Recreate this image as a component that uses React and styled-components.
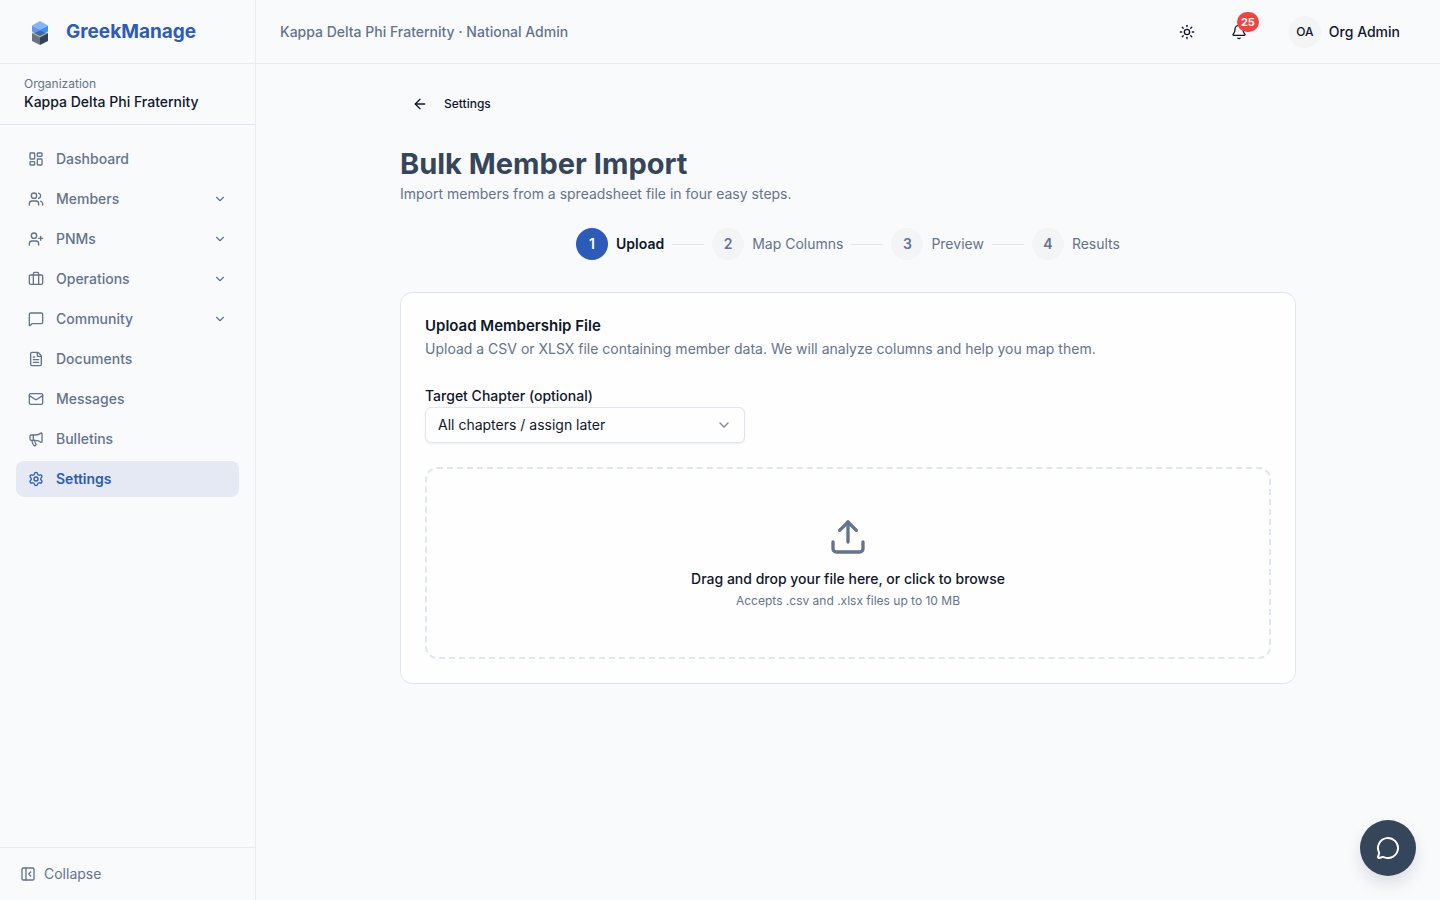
import { useState } from 'react'
import styled, { createGlobalStyle } from 'styled-components'
import {
    ArrowLeft, Bell, Briefcase, ChevronDown, FileText, LayoutDashboard, Mail, Megaphone,
    MessageCircle, MessageSquare, PanelLeftClose, Settings, Sun, Upload, UserPlus, Users
} from 'lucide-react'

const Colors = {
    page: '#f9fafc',
    card: '#fefefe',
    text: '#0f172a',
    heading: '#35455a',
    muted: '#64748b',
    primary: '#2d5bb9',
    active: '#e4e9f4',
    soft: '#f3f4f6',
    line: '#e9ecf1',
    border: '#dfe6f0',
    danger: '#ef4444'
}

const navItems = [
    { label: 'Dashboard', icon: LayoutDashboard },
    { label: 'Members', icon: Users, group: true },
    { label: 'PNMs', icon: UserPlus, group: true },
    { label: 'Operations', icon: Briefcase, group: true },
    { label: 'Community', icon: MessageSquare, group: true },
    { label: 'Documents', icon: FileText },
    { label: 'Messages', icon: Mail },
    { label: 'Bulletins', icon: Megaphone },
    { label: 'Settings', icon: Settings, active: true }
]

const steps = ['Upload', 'Map Columns', 'Preview', 'Results']

const Logo = () => (
    <svg width="16" height="24" viewBox="0 0 16 24" aria-hidden="true">
        <path d="M0 12 8 8 16 12 8 17Z" fill="#a3abb6" />
        <path d="M0 12 8 16.5V24L0 20Z" fill="#6b7482" />
        <path d="M16 12 8 16.5V24L16 20Z" fill="#364153" />
        <path d="M0 4.5 8 8.5V14L0 10.5Z" fill="#6a93f0" />
        <path d="M16 4.5 8 8.5V14L16 10.5Z" fill="#3a95ea" />
        <path d="M8 9.5 13.5 12 8 15 2.5 12Z" fill="#3b6d9f" />
        <path d="M0 4.5 8 0 16 4.5 8 8.8Z" fill="#85b4f3" />
    </svg>
)

const NavItem = ({ item }) => {

    const Icon = item.icon
    const content = (
        <>
            <Icon size={16} />
            <NavLabel>{item.label}</NavLabel>
            {item.group && <ChevronDown size={14} />}
        </>
    )

    if (item.group) return <NavRow as="button" type="button" aria-expanded="false">{content}</NavRow>

    return <NavRow href="#" $active={item.active}>{content}</NavRow>
}

const App = () => {

    const [chapter, setChapter] = useState('all')

    return (
        <>
            <GlobalStyle />
            <Layout>
                <Sidebar>
                    <Brand href="#"><Logo /><BrandName>GreekManage</BrandName></Brand>
                    <Organization>
                        <OrgCaption>Organization</OrgCaption>
                        <OrgName>Kappa Delta Phi Fraternity</OrgName>
                    </Organization>
                    <Nav>
                        {navItems.map(item => <NavItem key={item.label} item={item} />)}
                    </Nav>
                    <SidebarFooter>
                        <CollapseButton type="button"><PanelLeftClose size={16} />Collapse</CollapseButton>
                    </SidebarFooter>
                </Sidebar>

                <Body>
                    <Header>
                        <Context>Kappa Delta Phi Fraternity · National Admin</Context>
                        <Actions>
                            <IconButton type="button" aria-label="Toggle theme"><Sun size={16} /></IconButton>
                            <IconButton type="button" aria-label="Notifications">
                                <Bell size={16} />
                                <Badge>25</Badge>
                            </IconButton>
                            <UserButton type="button"><Avatar>OA</Avatar>Org Admin</UserButton>
                        </Actions>
                    </Header>

                    <Main>
                        <Content>
                            <BackLink href="#"><ArrowLeft size={16} />Settings</BackLink>
                            <Title>Bulk Member Import</Title>
                            <Text>Import members from a spreadsheet file in four easy steps.</Text>

                            <Stepper>
                                {steps.map((step, i) => (
                                    <Step key={step} $active={i === 0}>
                                        <StepNumber $active={i === 0}>{i + 1}</StepNumber>
                                        {step}
                                    </Step>
                                ))}
                            </Stepper>

                            <Card>
                                <CardTitle>Upload Membership File</CardTitle>
                                <Text>Upload a CSV or XLSX file containing member data. We will analyze columns and help you map them.</Text>
                                <Field>
                                    <FieldLabel htmlFor="chapter">Target Chapter (optional)</FieldLabel>
                                    <SelectHolder>
                                        <Select id="chapter" value={chapter} onChange={e => setChapter(e.target.value)}>
                                            <option value="all">All chapters / assign later</option>
                                        </Select>
                                        <ChevronDown size={16} />
                                    </SelectHolder>
                                </Field>
                                <DropZone>
                                    <FileInput type="file" accept=".csv,.xlsx" />
                                    <Upload size={40} />
                                    <DropTitle>Drag and drop your file here, or click to browse</DropTitle>
                                    <DropHint>Accepts .csv and .xlsx files up to 10 MB</DropHint>
                                </DropZone>
                            </Card>
                        </Content>
                    </Main>
                </Body>
            </Layout>
            <ChatButton type="button" aria-label="Open chat"><MessageCircle size={24} /></ChatButton>
        </>
    )
}

export default App

const GlobalStyle = createGlobalStyle`

    *
    {
        box-sizing: border-box;
    }

    body
    {
        margin: 0;
        background-color: ${Colors.page};
        color: ${Colors.text};
        font-family: Inter, "Liberation Sans", sans-serif;
        font-size: 14px;
        line-height: 20px;
        -webkit-font-smoothing: antialiased;
    }

    h1, p
    {
        margin: 0;
    }

    a
    {
        color: inherit;
        text-decoration: none;
    }

    button, select
    {
        font: inherit;
        color: inherit;
        background: none;
        border: none;
        padding: 0;
        cursor: pointer;
    }

    svg
    {
        flex-shrink: 0;
    }

`

const Layout = styled.div`

    display: flex;
    min-height: 100vh;

`
const Sidebar = styled.aside`

    position: sticky;
    top: 0;
    display: flex;
    flex-direction: column;
    flex-shrink: 0;
    width: 256px;
    height: 100vh;
    border-right: 1px solid ${Colors.line};

`
const Brand = styled.a`

    display: flex;
    align-items: center;
    gap: 18px;
    height: 64px;
    padding: 2px 32px 0;
    border-bottom: 1px solid ${Colors.line};

`
const BrandName = styled.span`

    font-size: 19px;
    font-weight: 700;
    line-height: 28px;
    color: ${Colors.primary};
    padding-bottom: 2px;

`
const Organization = styled.div`

    padding: 12px 24px;
    border-bottom: 1px solid ${Colors.border};

`
const OrgCaption = styled.p`

    font-size: 12px;
    line-height: 16px;
    color: ${Colors.muted};

`
const OrgName = styled.p`

    font-weight: 500;

`
const Nav = styled.nav`

    display: flex;
    flex-direction: column;
    flex: 1;
    gap: 4px;
    padding: 16px;
    overflow-y: auto;

`
const NavRow = styled.a`

    display: flex;
    align-items: center;
    gap: 12px;
    height: 36px;
    flex-shrink: 0;
    padding: 0 12px;
    border-radius: 8px;
    font-weight: ${props => props.$active ? 600 : 500};
    text-align: left;
    color: ${props => props.$active ? Colors.primary : Colors.muted};
    background-color: ${props => props.$active ? Colors.active : 'transparent'};

`
const NavLabel = styled.span`

    flex: 1;

`
const SidebarFooter = styled.div`

    padding: 8px;
    border-top: 1px solid ${Colors.line};

`
const CollapseButton = styled.button`

    display: flex;
    align-items: center;
    gap: 8px;
    width: 100%;
    height: 36px;
    padding: 0 12px;
    color: ${Colors.muted};

`
const Body = styled.div`

    flex: 1;
    min-width: 0;

`
const Header = styled.header`

    display: flex;
    align-items: center;
    justify-content: space-between;
    height: 64px;
    padding: 0 24px;
    border-bottom: 1px solid ${Colors.line};

`
const Context = styled.p`

    font-weight: 500;
    color: ${Colors.muted};

`
const Actions = styled.div`

    display: flex;
    align-items: center;
    gap: 16px;

`
const IconButton = styled.button`

    position: relative;
    display: flex;
    align-items: center;
    justify-content: center;
    width: 36px;
    height: 36px;

`
const Badge = styled.span`

    position: absolute;
    top: -2px;
    right: -2px;
    min-width: 20px;
    height: 20px;
    padding: 0 4px;
    border-radius: 10px;
    background-color: ${Colors.danger};
    color: #ffffff;
    font-size: 11px;
    font-weight: 700;
    text-align: center;

`
const UserButton = styled.button`

    display: flex;
    align-items: center;
    gap: 8px;
    padding: 0 16px;
    font-weight: 500;

`
const Avatar = styled.span`

    display: flex;
    align-items: center;
    justify-content: center;
    width: 32px;
    height: 32px;
    border-radius: 50%;
    background-color: ${Colors.soft};
    font-size: 12px;

`
const Main = styled.main`

    padding: 24px;

`
const Content = styled.div`

    max-width: 896px;
    margin: 0 auto;

`
const BackLink = styled.a`

    display: inline-flex;
    align-items: center;
    gap: 16px;
    height: 32px;
    padding: 0 12px;
    font-size: 12px;
    font-weight: 500;

`
const Title = styled.h1`

    margin-top: 24px;
    font-size: 29px;
    font-weight: 700;
    line-height: 40px;
    color: ${Colors.heading};

`
const Text = styled.p`

    color: ${Colors.muted};

`
const Stepper = styled.ol`

    display: flex;
    align-items: center;
    justify-content: center;
    gap: 8px;
    margin: 24px 0 32px;
    padding: 0;
    list-style: none;

`
const Step = styled.li`

    display: flex;
    align-items: center;
    gap: 8px;
    font-weight: ${props => props.$active ? 600 : 400};
    color: ${props => props.$active ? Colors.text : Colors.muted};

    &:not(:last-child)::after
    {
        content: '';
        width: 32px;
        height: 1px;
        background-color: ${Colors.border};
    }

`
const StepNumber = styled.span`

    display: flex;
    align-items: center;
    justify-content: center;
    width: 32px;
    height: 32px;
    border-radius: 50%;
    font-weight: 600;
    color: ${props => props.$active ? '#ffffff' : Colors.muted};
    background-color: ${props => props.$active ? Colors.primary : Colors.soft};

`
const Card = styled.section`

    padding: 24px;
    border: 1px solid ${Colors.border};
    border-radius: 12px;
    background-color: ${Colors.card};

`
const CardTitle = styled.h2`

    margin: 0 0 4px;
    font-size: 15px;
    font-weight: 600;
    line-height: 18px;

`
const Field = styled.div`

    max-width: 320px;
    margin: 24px 0;

`
const FieldLabel = styled.label`

    display: block;
    padding-top: 2px;
    font-weight: 500;
    line-height: 22px;

`
const SelectHolder = styled.div`

    position: relative;

    svg
    {
        position: absolute;
        top: 10px;
        right: 13px;
        color: ${Colors.text};
        opacity: 0.5;
        pointer-events: none;
    }

`
const Select = styled.select`

    display: block;
    appearance: none;
    width: 100%;
    height: 36px;
    padding: 0 36px 0 12px;
    border: 1px solid ${Colors.border};
    border-radius: 6px;
    background-color: ${Colors.card};
    box-shadow: 0 1px 2px rgba(15, 23, 42, 0.08);

`
const DropZone = styled.label`

    position: relative;
    display: flex;
    flex-direction: column;
    align-items: center;
    padding: 48px;
    border: 2px dashed ${Colors.border};
    border-radius: 12px;
    color: ${Colors.muted};
    cursor: pointer;

`
const FileInput = styled.input`

    position: absolute;
    inset: 0;
    width: 100%;
    height: 100%;
    opacity: 0;
    cursor: pointer;

`
const DropTitle = styled.span`

    margin-top: 12px;
    font-weight: 500;
    color: ${Colors.text};

`
const DropHint = styled.span`

    margin-top: 4px;
    font-size: 12px;
    line-height: 16px;

`
const ChatButton = styled.button`

    position: fixed;
    right: 24px;
    bottom: 24px;
    display: flex;
    align-items: center;
    justify-content: center;
    width: 56px;
    height: 56px;
    border-radius: 50%;
    background-color: ${Colors.heading};
    color: #ffffff;
    box-shadow: 0 8px 16px rgba(15, 23, 42, 0.12);

`
